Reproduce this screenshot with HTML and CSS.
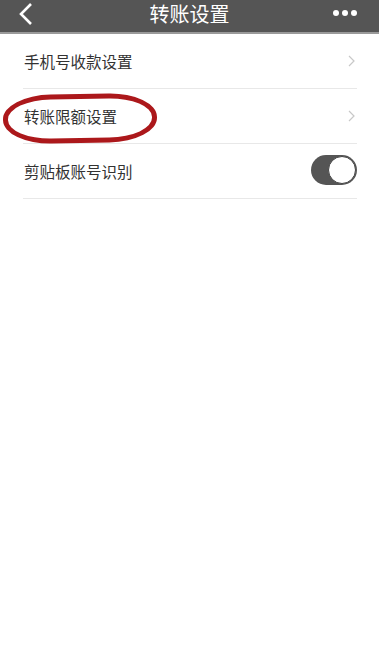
FILE: index.html
```html
<!DOCTYPE html>
<html lang="zh">
<head>
<meta charset="utf-8">
<link rel="stylesheet" href="styles.css">
</head>
<body>
<header class="bar">
  <svg class="back" width="16" height="24" viewBox="0 0 16 24"><path d="M13 2 L3 12 L13 22" fill="none" stroke="#fff" stroke-width="2.6"/></svg>
  <div class="title">转账设置</div>
  <div class="more"><span></span><span></span><span></span></div>
</header>
<main class="list">
  <div class="row"><span class="label">手机号收款设置</span><svg class="chev" width="7" height="12" viewBox="0 0 7 12"><path d="M1 1 L6 6 L1 11" fill="none" stroke="#c8c8c8" stroke-width="1.2"/></svg></div>
  <div class="row"><span class="label">转账限额设置</span><svg class="chev" width="7" height="12" viewBox="0 0 7 12"><path d="M1 1 L6 6 L1 11" fill="none" stroke="#c8c8c8" stroke-width="1.2"/></svg><div class="mark"></div></div>
  <div class="row"><span class="label">剪贴板账号识别</span><div class="toggle"><div class="knob"></div></div></div>
</main>
</body>
</html>
```
FILE: styles.css
```css
html, body { margin: 0; padding: 0; background: #fff; }
body { font-family: "Noto Sans CJK SC", "Noto Sans", sans-serif; width: 379px; height: 650px; overflow: hidden; }
.bar {
  height: 32px;
  background: #555555;
  border-bottom: 2px solid #9a9a9a;
  display: flex;
  align-items: center;
  justify-content: space-between;
  padding: 0 22px 0 18px;
  position: relative;
}
.back { display: block; margin-top: -4px; }
.title {
  position: absolute;
  left: 0; right: 0; top: 3px;
  text-align: center;
  color: #fff;
  font-size: 20px;
  line-height: 21px;
}
.more { display: flex; gap: 3px; margin-top: -6px; }
.more span { width: 6px; height: 6px; border-radius: 50%; background: #fff; display: block; }
.list { padding: 0 22px 0 23px; }
.row {
  height: 54px;
  border-bottom: 1px solid #e8e8e8;
  display: flex;
  align-items: center;
  justify-content: space-between;
  position: relative;
}
.label { font-size: 15.5px; color: #333; padding-left: 1px; }
.chev { display: block; margin-right: 2px; }
.toggle {
  width: 46px; height: 30px;
  background: #555;
  border-radius: 15px;
  position: relative;
  margin-top: -2px;
}
.knob {
  position: absolute;
  right: 1px; top: 1px;
  width: 26px; height: 26px;
  border-radius: 50%;
  background: #fff;
  border: 1px solid #444;
}
.mark {
  position: absolute;
  left: -20px; top: 5px;
  width: 144px; height: 39px;
  border: 5px solid #ac181b;
  border-radius: 48px / 24px;
  transform: rotate(-1deg);
}
```
